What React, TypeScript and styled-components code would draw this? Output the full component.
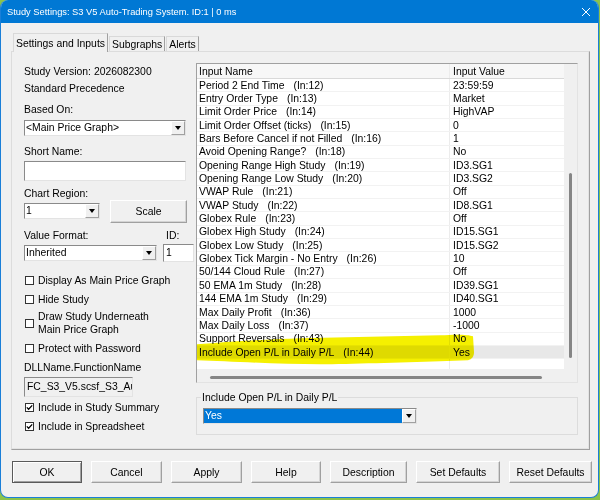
import styled, { createGlobalStyle } from 'styled-components';

type InputRow = { name: string; index: number; value: string };

const INPUTS: InputRow[] = [
    { name: 'Period 2 End Time', index: 12, value: '23:59:59' },
    { name: 'Entry Order Type', index: 13, value: 'Market' },
    { name: 'Limit Order Price', index: 14, value: 'HighVAP' },
    { name: 'Limit Order Offset (ticks)', index: 15, value: '0' },
    { name: 'Bars Before Cancel if not Filled', index: 16, value: '1' },
    { name: 'Avoid Opening Range?', index: 18, value: 'No' },
    { name: 'Opening Range High Study', index: 19, value: 'ID3.SG1' },
    { name: 'Opening Range Low Study', index: 20, value: 'ID3.SG2' },
    { name: 'VWAP Rule', index: 21, value: 'Off' },
    { name: 'VWAP Study', index: 22, value: 'ID8.SG1' },
    { name: 'Globex Rule', index: 23, value: 'Off' },
    { name: 'Globex High Study', index: 24, value: 'ID15.SG1' },
    { name: 'Globex Low Study', index: 25, value: 'ID15.SG2' },
    { name: 'Globex Tick Margin - No Entry', index: 26, value: '10' },
    { name: '50/144 Cloud Rule', index: 27, value: 'Off' },
    { name: '50 EMA 1m Study', index: 28, value: 'ID39.SG1' },
    { name: '144 EMA 1m Study', index: 29, value: 'ID40.SG1' },
    { name: 'Max Daily Profit', index: 36, value: '1000' },
    { name: 'Max Daily Loss', index: 37, value: '-1000' },
    { name: 'Support Reversals', index: 43, value: 'No' },
    { name: 'Include Open P/L in Daily P/L', index: 44, value: 'Yes' },
];

const BUTTONS = [
    { label: 'OK', width: 70, primary: true },
    { label: 'Cancel', width: 71 },
    { label: 'Apply', width: 71 },
    { label: 'Help', width: 70 },
    { label: 'Description', width: 77 },
    { label: 'Set Defaults', width: 84 },
    { label: 'Reset Defaults', width: 83 },
];

const GlobalStyle = createGlobalStyle`
    * { box-sizing: border-box; }
    html, body { margin: 0; padding: 0; }
    body {
        width: 600px;
        height: 500px;
        overflow: hidden;
        background: #8bc34a;
        font-family: "Liberation Sans", Arial, sans-serif;
        font-size: 10.4px;
        color: #000;
    }
`;

const Window = styled.div`
    width: 599px;
    height: 498px;
    display: flex;
    flex-direction: column;
    background: #f0f0f0;
    border: 1px solid #1a7fd8;
    border-top: none;
    border-radius: 8px;
    overflow: hidden;
`;

const TitleBar = styled.div`
    height: 23px;
    flex: none;
    display: flex;
    align-items: center;
    justify-content: space-between;
    padding: 1px 7px 0 6px;
    background: #0078d4;
    color: #fff;
    font-size: 9.3px;
`;

const Client = styled.div`
    flex: 1;
    display: flex;
    flex-direction: column;
    padding: 10px 8px 0 10px;
`;

const TabStrip = styled.div`
    height: 19px;
    display: flex;
    align-items: flex-end;
    padding-left: 2px;
    margin-bottom: -1px;
    position: relative;
    z-index: 1;
`;

const Tab = styled.div<{ $active?: boolean }>`
    height: ${p => (p.$active ? 19 : 15)}px;
    margin-bottom: ${p => (p.$active ? 0 : 1)}px;
    margin-left: ${p => (p.$active ? 0 : 1)}px;
    padding: 0 2px;
    display: flex;
    align-items: center;
    background: #f0f0f0;
    border: 1px solid;
    border-color: #d9d9d9 #a0a0a0 transparent #d9d9d9;
    border-bottom: none;
    white-space: nowrap;
`;

const Panel = styled.div`
    height: 399px;
    display: flex;
    padding: 11px 11px 0 12px;
    border: 1px solid;
    border-color: #dcdcdc #a0a0a0 #a0a0a0 #dcdcdc;
    box-shadow: inset -1px -1px 0 #e3e3e3;
`;

const LeftColumn = styled.div`
    width: 172px;
    flex: none;
    display: flex;
    flex-direction: column;
    padding-top: 1.5px;
`;

const RightColumn = styled.div`
    width: 382px;
    flex: none;
    display: flex;
    flex-direction: column;
`;

const Label = styled.div<{ $gap?: number; $width?: number }>`
    line-height: 13px;
    margin-top: ${p => p.$gap ?? 0}px;
    width: ${p => (p.$width ? `${p.$width}px` : 'auto')};
    white-space: nowrap;
`;

const FieldRow = styled.div<{ $gap?: number }>`
    display: flex;
    align-items: center;
    margin-top: ${p => p.$gap ?? 0}px;
`;

const Combo = styled.div<{ $width: number }>`
    width: ${p => p.$width}px;
    height: 16px;
    flex: none;
    display: flex;
    border: 1px solid;
    border-color: #8a8a8a #e3e3e3 #e3e3e3 #8a8a8a;
    background: #fff;
`;

const ComboText = styled.div<{ $selected?: boolean }>`
    flex: 1;
    padding-left: 1px;
    line-height: 14px;
    white-space: nowrap;
    overflow: hidden;
    background: ${p => (p.$selected ? '#0078d7' : 'transparent')};
    color: ${p => (p.$selected ? '#fff' : '#000')};
`;

const DropButton = styled.div`
    width: 14px;
    flex: none;
    display: flex;
    align-items: center;
    justify-content: center;
    background: #f0f0f0;
    border: 1px solid;
    border-color: #fff #a0a0a0 #a0a0a0 #fff;
`;

const Arrow = styled.span`
    width: 0;
    height: 0;
    border-left: 3.5px solid transparent;
    border-right: 3.5px solid transparent;
    border-top: 4px solid #000;
`;

const TextBox = styled.div<{ $width: number; $height?: number; $gapLeft?: number; $readOnly?: boolean }>`
    width: ${p => p.$width}px;
    height: ${p => p.$height ?? 20}px;
    line-height: ${p => (p.$height ?? 20) - 2}px;
    margin-left: ${p => p.$gapLeft ?? 0}px;
    flex: none;
    padding-left: 2px;
    white-space: nowrap;
    overflow: hidden;
    background: ${p => (p.$readOnly ? '#f0f0f0' : '#fff')};
    border: 1px solid;
    border-color: #8a8a8a #e3e3e3 #e3e3e3 #8a8a8a;
`;

const Button = styled.div<{ $width: number; $height?: number; $gapLeft?: number; $primary?: boolean }>`
    width: ${p => p.$width}px;
    height: ${p => p.$height ?? 22}px;
    margin-left: ${p => p.$gapLeft ?? 0}px;
    flex: none;
    display: flex;
    align-items: center;
    justify-content: center;
    background: #f0f0f0;
    border: 1px solid;
    border-color: ${p => (p.$primary ? '#5a5a5a' : '#fff #a0a0a0 #a0a0a0 #fff')};
    box-shadow: ${p =>
        p.$primary
            ? 'inset 1px 1px 0 #fff, inset -1px -1px 0 #a0a0a0'
            : 'inset -1px -1px 0 #d4d4d4'};
    white-space: nowrap;
`;

const CheckRow = styled.div<{ $gap: number }>`
    display: flex;
    align-items: center;
    gap: 4px;
    margin-top: ${p => p.$gap}px;
    padding-left: 1px;
`;

const Box = styled.div`
    width: 9px;
    height: 9px;
    flex: none;
    display: flex;
    align-items: center;
    justify-content: center;
    background: #fff;
    border: 1px solid #333;
`;

const CheckLabel = styled.div<{ $lineHeight?: number }>`
    line-height: ${p => p.$lineHeight ?? 13}px;
`;

const Frame = styled.div`
    position: relative;
    height: 320.35px;
    flex: none;
    display: grid;
    grid-template-columns: 1fr 13px;
    grid-template-rows: 1fr 13px;
    background: #f0f0f0;
    border: 1px solid;
    border-color: #a0a0a0 #e3e3e3 #e3e3e3 #a0a0a0;
`;

const List = styled.div`
    display: flex;
    flex-direction: column;
    background: #fff;
    overflow: hidden;
`;

const HeaderRow = styled.div`
    height: 15px;
    flex: none;
    display: flex;
    background: #f7f7f7;
    border-bottom: 1px solid #d9d9d9;
`;

const Row = styled.div<{ $selected?: boolean }>`
    height: 13.35px;
    flex: none;
    display: flex;
    background: ${p => (p.$selected ? '#e8e8e8' : '#fff')};
    border-bottom: 1px solid #f2f2f2;
`;

const FillerRow = styled.div`
    flex: 1;
    display: flex;
`;

const NameCell = styled.div`
    width: 253px;
    flex: none;
    display: flex;
    align-items: center;
    padding-left: 2px;
    border-right: 1px solid #ececec;
    white-space: nowrap;
    overflow: hidden;
`;

const ValueCell = styled.div`
    flex: 1;
    display: flex;
    align-items: center;
    padding-left: 3px;
    white-space: nowrap;
`;

const InTag = styled.span`
    margin-left: 9px;
`;

const VScroll = styled.div`
    display: flex;
    flex-direction: column;
    align-items: center;
    padding-top: 109px;
`;

const HScroll = styled.div`
    display: flex;
    padding: 7px 0 0 13px;
`;

const Thumb = styled.div<{ $w: number; $h: number }>`
    width: ${p => p.$w}px;
    height: ${p => p.$h}px;
    background: #858585;
    border-radius: 2px;
`;

const Highlight = styled.svg`
    position: absolute;
    left: 0;
    top: 0;
    width: 100%;
    height: 100%;
    pointer-events: none;
    mix-blend-mode: multiply;
    overflow: visible;
`;

const Group = styled.fieldset`
    margin: 7.6px 0 0 0;
    padding: 4px 6px 10px 6px;
    min-width: 0;
    border: 1px solid #dcdcdc;
`;

const Legend = styled.legend`
    padding: 0 1px;
    margin-left: -2px;
    line-height: 13px;
`;

const ButtonRow = styled.div`
    display: flex;
    gap: 9px;
    padding-left: 1px;
    margin-top: 11px;
`;

const DropDown = ({ value, width, selected }: { value: string; width: number; selected?: boolean }) => (
    <Combo $width={width}>
        <ComboText $selected={selected}>{value}</ComboText>
        <DropButton>
            <Arrow />
        </DropButton>
    </Combo>
);

const CheckBox = ({ checked, children, gap, lineHeight }: { checked?: boolean; children: React.ReactNode; gap: number; lineHeight?: number }) => (
    <CheckRow $gap={gap}>
        <Box>
            {checked && (
                <svg width="7" height="7" viewBox="0 0 7 7">
                    <polyline points="0.8,3.4 2.6,5.2 6.2,1.4" fill="none" stroke="#000" strokeWidth="1.3" />
                </svg>
            )}
        </Box>
        <CheckLabel $lineHeight={lineHeight}>{children}</CheckLabel>
    </CheckRow>
);

const App = () => {
    return (
        <>
            <GlobalStyle />
            <Window>
                <TitleBar>
                    <span>Study Settings: S3 V5 Auto-Trading System. ID:1 | 0 ms</span>
                    <svg width="10" height="10" viewBox="0 0 10 10">
                        <path d="M1 1 L9 9 M9 1 L1 9" stroke="#fff" strokeWidth="1" />
                    </svg>
                </TitleBar>
                <Client>
                    <TabStrip>
                        <Tab $active>Settings and Inputs</Tab>
                        <Tab>Subgraphs</Tab>
                        <Tab>Alerts</Tab>
                    </TabStrip>
                    <Panel>
                        <LeftColumn>
                            <Label>Study Version: 2026082300</Label>
                            <Label $gap={4}>Standard Precedence</Label>
                            <Label $gap={8}>Based On:</Label>
                            <FieldRow $gap={4}>
                                <DropDown value="<Main Price Graph>" width={162} />
                            </FieldRow>
                            <Label $gap={9}>Short Name:</Label>
                            <FieldRow $gap={3}>
                                <TextBox $width={162} />
                            </FieldRow>
                            <Label $gap={6}>Chart Region:</Label>
                            <FieldRow>
                                <DropDown value="1" width={76} />
                                <Button $width={77} $height={23} $gapLeft={10}>Scale</Button>
                            </FieldRow>
                            <FieldRow $gap={6}>
                                <Label $width={142}>Value Format:</Label>
                                <Label>ID:</Label>
                            </FieldRow>
                            <FieldRow $gap={2}>
                                <DropDown value="Inherited" width={133} />
                                <TextBox $width={31} $height={18} $gapLeft={6}>1</TextBox>
                            </FieldRow>
                            <CheckBox gap={12}>Display As Main Price Graph</CheckBox>
                            <CheckBox gap={6.5}>Hide Study</CheckBox>
                            <CheckBox gap={5} lineHeight={12.6}>
                                Draw Study Underneath
                                <br />
                                Main Price Graph
                            </CheckBox>
                            <CheckBox gap={5.6}>Protect with Password</CheckBox>
                            <Label $gap={6.3}>DLLName.FunctionName</Label>
                            <FieldRow $gap={2.5}>
                                <TextBox $width={109} $readOnly>FC_S3_V5.scsf_S3_Au</TextBox>
                            </FieldRow>
                            <CheckBox gap={4.2} checked>Include in Study Summary</CheckBox>
                            <CheckBox gap={6.3} checked>Include in Spreadsheet</CheckBox>
                        </LeftColumn>
                        <RightColumn>
                            <Frame>
                                <List>
                                    <HeaderRow>
                                        <NameCell>Input Name</NameCell>
                                        <ValueCell>Input Value</ValueCell>
                                    </HeaderRow>
                                    {INPUTS.map(({ name, index, value }) => (
                                        <Row key={index} $selected={index === 44}>
                                            <NameCell>
                                                {name}
                                                <InTag>(In:{index})</InTag>
                                            </NameCell>
                                            <ValueCell>{value}</ValueCell>
                                        </Row>
                                    ))}
                                    <FillerRow>
                                        <NameCell />
                                        <ValueCell />
                                    </FillerRow>
                                </List>
                                <VScroll>
                                    <Thumb $w={3} $h={185} />
                                </VScroll>
                                <HScroll>
                                    <Thumb $w={332} $h={3} />
                                </HScroll>
                                <div />
                                {/* highlighter stroke over the last two rows */}
                                <Highlight viewBox="0 0 380 318" preserveAspectRatio="none">
                                    <path
                                        d="M0,280 C33,277 73,275 103,274 L243,271 C258,270 271,270 276,272 L277,288 C277,292 275,295 271,296 L243,297 C203,298 153,300 123,300 C83,300 33,297 0,296 Z"
                                        fill="#f5f000"
                                    />
                                </Highlight>
                            </Frame>
                            <Group>
                                <Legend>Include Open P/L in Daily P/L</Legend>
                                <DropDown value="Yes" width={214} selected />
                            </Group>
                        </RightColumn>
                    </Panel>
                    <ButtonRow>
                        {BUTTONS.map(({ label, width, primary }) => (
                            <Button key={label} $width={width} $primary={primary}>
                                {label}
                            </Button>
                        ))}
                    </ButtonRow>
                </Client>
            </Window>
        </>
    );
};

export default App;
